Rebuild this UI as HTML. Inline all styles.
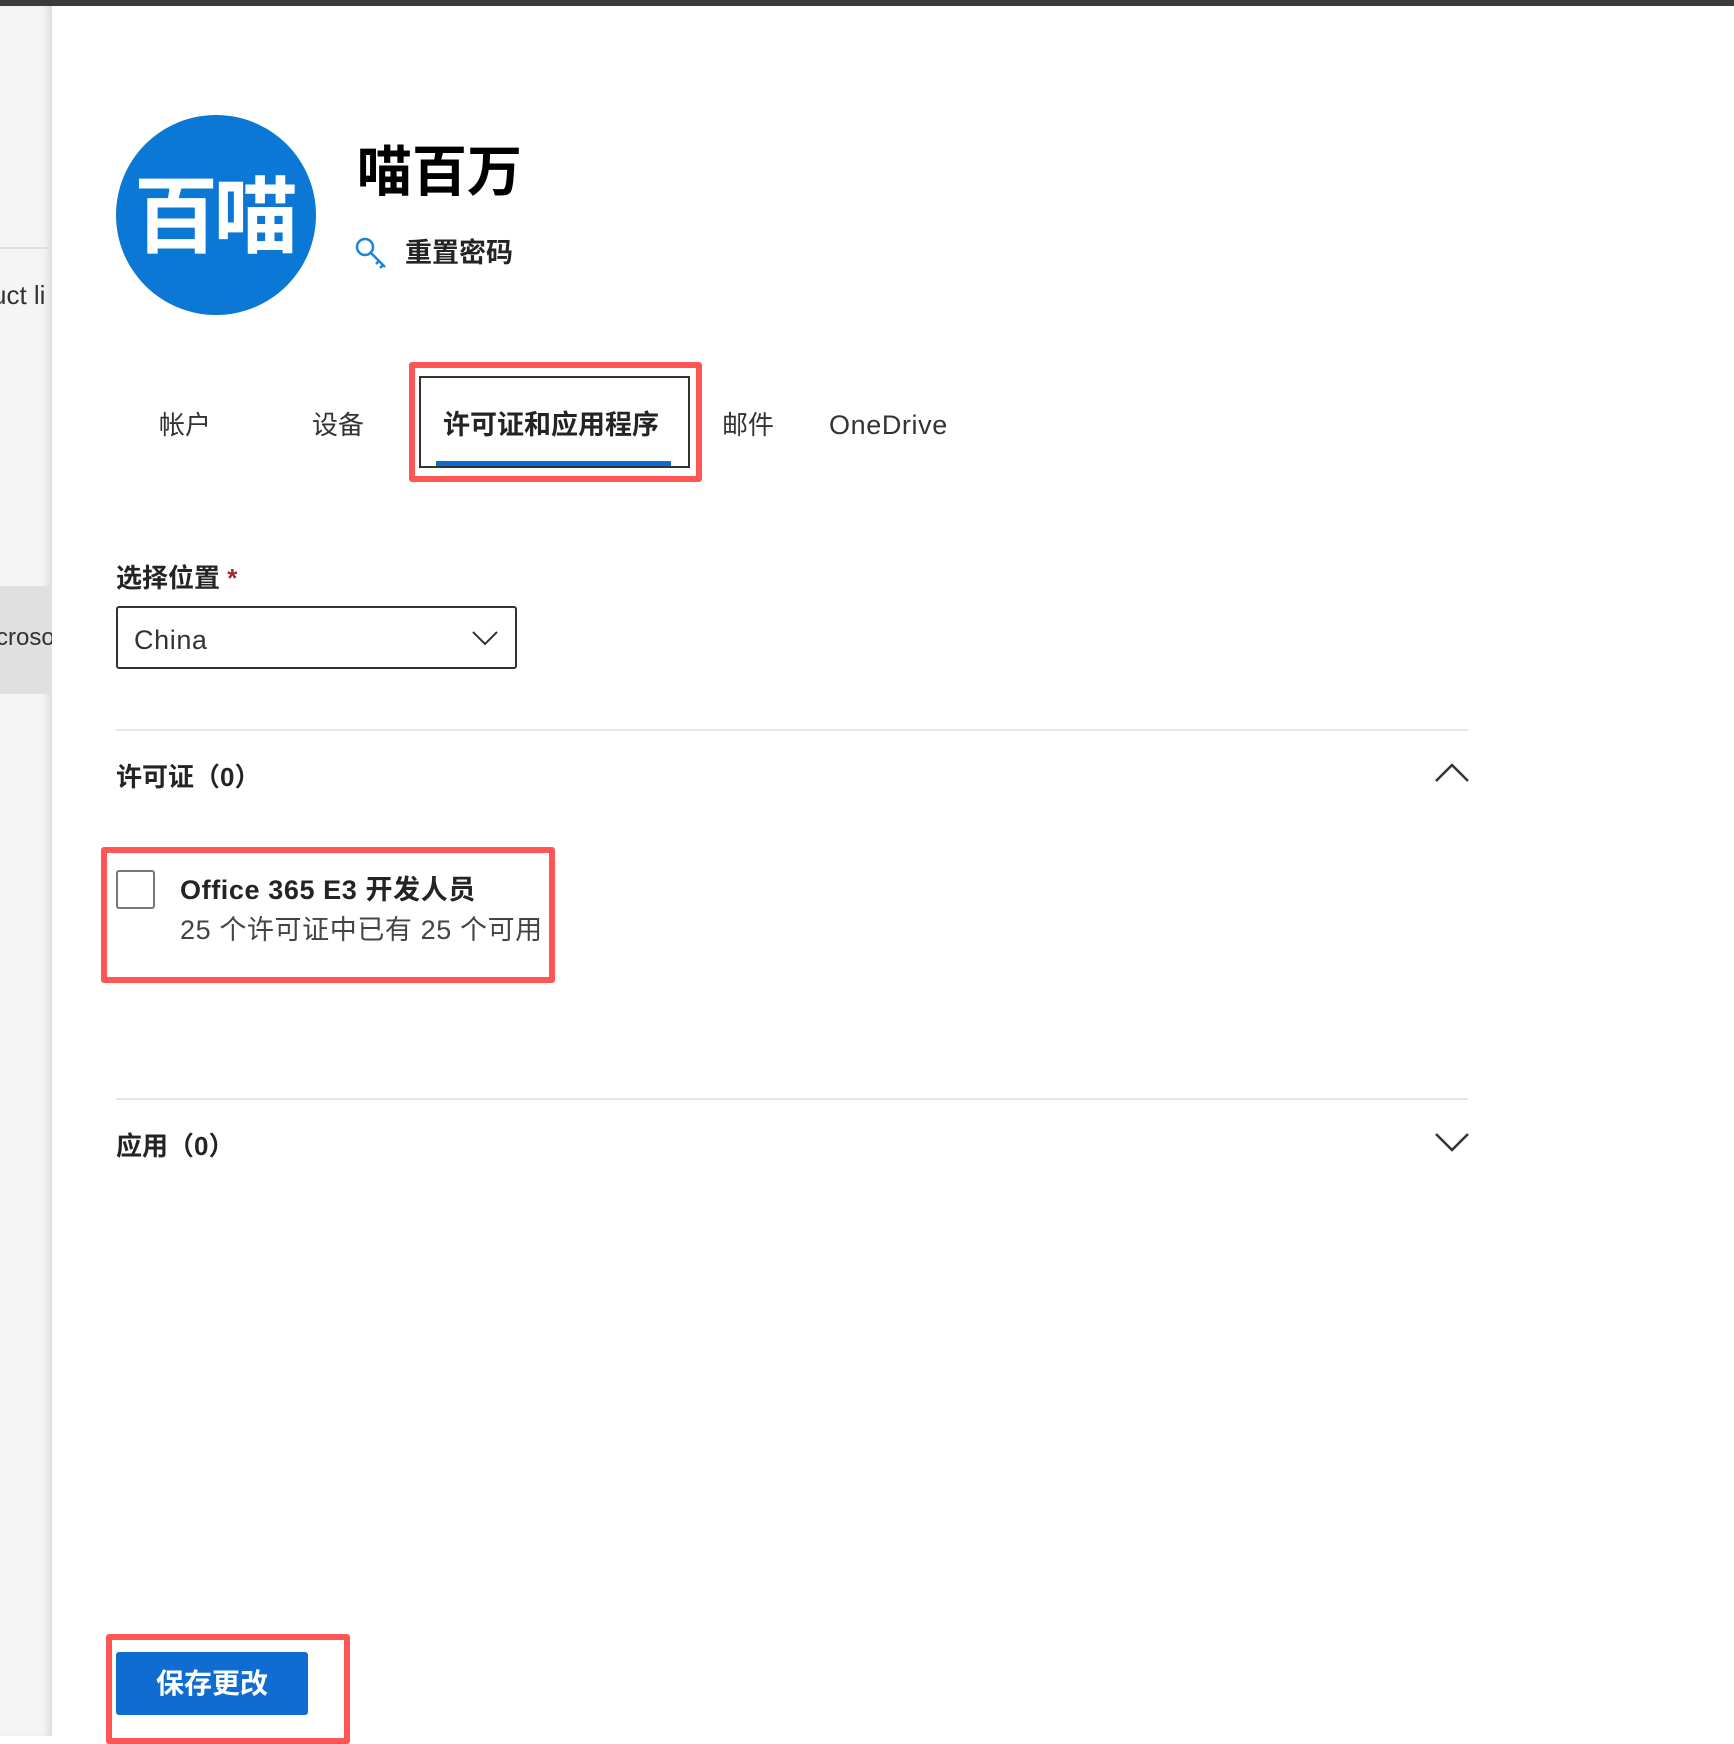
<!DOCTYPE html>
<html><head><meta charset="utf-8"><style>
*{margin:0;padding:0;box-sizing:border-box}
body{width:1734px;height:1736px;position:relative;overflow:hidden;background:#fff;font-family:"Liberation Sans","Noto Sans CJK SC",sans-serif;color:#242424}
.a{position:absolute;white-space:nowrap}
.t{font-size:26px;line-height:26px}
.l{letter-spacing:0.6px}
b{font-weight:700}
</style></head><body>
<div class="a" style="left:0;top:0;width:1734px;height:6px;background:#3b3b3b"></div>
<div class="a" style="left:0;top:6px;width:52px;height:1730px;background:#f5f5f5;box-shadow:inset -8px 0 10px -6px rgba(0,0,0,.15)"></div>
<div class="a" style="left:0;top:247px;width:52px;height:2px;background:#ddd"></div>
<div class="a t" style="left:-8px;top:282px;color:#333;width:60px;overflow:hidden">uct li</div>
<div class="a" style="left:0;top:586px;width:52px;height:108px;background:#e0e0e0"></div>
<div class="a" style="left:-4px;top:624px;font-size:24px;color:#333;width:56px;overflow:hidden">croso</div>
<div class="a" style="left:116px;top:115px;width:200px;height:200px;border-radius:50%;background:#0a78d4"></div>
<div class="a" style="left:134px;top:175px;font-size:84px;line-height:84px;font-weight:700;color:#fff;letter-spacing:-4px">百喵</div>
<div class="a" style="left:357px;top:145px;font-size:55px;line-height:55px;font-weight:700;color:#000">喵百万</div>
<svg class="a" style="left:354px;top:236px" width="36" height="34" viewBox="0 0 36 34"><circle cx="11" cy="11" r="8" fill="none" stroke="#1a86d9" stroke-width="2.5"/><path d="M17 17 L31 31 M25 25 L22 28 M29 29 L26 32" stroke="#1a86d9" stroke-width="2.5" fill="none"/></svg>
<div class="a t" style="left:405px;top:240px;font-weight:700;font-size:27px">重置密码</div>
<div class="a t" style="left:159px;top:412px;color:#333">帐户</div>
<div class="a t" style="left:312px;top:412px;color:#333">设备</div>
<div class="a" style="left:409px;top:362px;width:293px;height:120px;border:6px solid #f55;border-radius:3px"></div>
<div class="a" style="left:419px;top:376px;width:271px;height:92px;border:2px solid #333"></div>
<div class="a t" style="left:443px;top:412px;font-weight:700;font-size:27px">许可证和应用程序</div>
<div class="a" style="left:436px;top:461px;width:235px;height:5px;background:#0a6cd0"></div>
<div class="a t" style="left:722px;top:412px;color:#333">邮件</div>
<div class="a t l" style="left:829px;top:412px;color:#333;font-size:27px">OneDrive</div>
<div class="a t" style="left:116px;top:565px;font-weight:700">选择位置 <span style="color:#a4262c">*</span></div>
<div class="a" style="left:116px;top:606px;width:401px;height:63px;border:2px solid #333;border-radius:3px"></div>
<div class="a t l" style="left:134px;top:627px;color:#333;font-size:27px">China</div>
<svg class="a" style="left:472px;top:630px" width="26" height="16"><path d="M1 2 L13 14 L25 2" fill="none" stroke="#333" stroke-width="2"/></svg>
<div class="a" style="left:116px;top:729px;width:1352px;height:2px;background:#e6e6e6"></div>
<div class="a t" style="left:116px;top:764px;font-weight:700">许可证（0）</div>
<svg class="a" style="left:1434px;top:761px" width="36" height="22"><path d="M2 20 L18 4 L34 20" fill="none" stroke="#333" stroke-width="2.5"/></svg>
<div class="a" style="left:101px;top:847px;width:454px;height:136px;border:6px solid #f55;border-radius:3px"></div>
<div class="a" style="left:116px;top:870px;width:39px;height:39px;border:2px solid #777;border-radius:3px"></div>
<div class="a t l" style="left:180px;top:877px;font-weight:700;font-size:27px">Office 365 E3 开发人员</div>
<div class="a t l" style="left:180px;top:917px;color:#444;font-size:27px">25 个许可证中已有 25 个可用</div>
<div class="a" style="left:116px;top:1098px;width:1352px;height:2px;background:#e6e6e6"></div>
<div class="a t" style="left:116px;top:1133px;font-weight:700">应用（0）</div>
<svg class="a" style="left:1434px;top:1132px" width="36" height="22"><path d="M2 2 L18 18 L34 2" fill="none" stroke="#333" stroke-width="2.5"/></svg>
<div class="a" style="left:106px;top:1634px;width:244px;height:110px;border:6px solid #f55;border-radius:3px"></div>
<div class="a" style="left:116px;top:1652px;width:192px;height:63px;background:#0f6cd0;border-radius:3px;color:#fff;font-size:28px;font-weight:700;line-height:63px;text-align:center">保存更改</div>
</body></html>
